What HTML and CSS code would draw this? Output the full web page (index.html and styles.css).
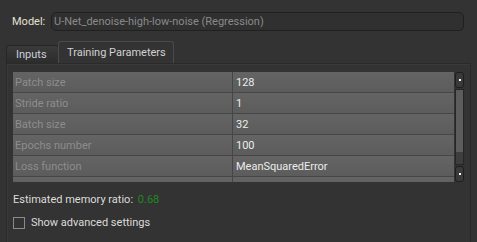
FILE: index.html
```html
<!DOCTYPE html>
<html lang="en">

<head>
  <meta charset="UTF-8">
  <title>Training Parameters</title>
  <link rel="stylesheet" href="styles.css">
</head>

<body>
  <div class="model-row">
    <label class="model-label">Model:</label>
    <div class="model-box">U-Net_denoise-high-low-noise (Regression)</div>
  </div>

  <div class="tabs">
    <div class="tab">Inputs</div>
    <div class="tab active">Training Parameters</div>
  </div>

  <div class="panel">
    <div class="params">
      <div class="grid">
        <div class="row"><span class="key">Patch size</span><span class="val">128</span></div>
        <div class="row"><span class="key">Stride ratio</span><span class="val">1</span></div>
        <div class="row"><span class="key">Batch size</span><span class="val">32</span></div>
        <div class="row"><span class="key">Epochs number</span><span class="val">100</span></div>
        <div class="row"><span class="key">Loss function</span><span class="val">MeanSquaredError</span></div>
        <div class="row"><span class="key"></span><span class="val"></span></div>
      </div>
      <div class="scrollbar">
        <div class="sb-btn"><i></i></div>
        <div class="sb-track"><div class="sb-handle"></div></div>
        <div class="sb-btn"><i></i></div>
      </div>
    </div>

    <p class="estimate">Estimated memory ratio: <span class="ratio">0.68</span></p>

    <label class="check">
      <span class="box"></span>
      Show advanced settings
    </label>
  </div>
</body>

</html>
```

FILE: styles.css
```css
body {
  background-color: #333333;
  margin: 0;
  height: 242px;
  overflow: hidden;
  display: flex;
  flex-direction: column;
  font-family: Roboto, "Liberation Sans", sans-serif;
  font-size: 11px;
  color: #dcdcdc;
}

.model-row {
  display: flex;
  align-items: center;
  padding: 12px 13px 0 12px;
}

.model-label {
  width: 39px;
  color: #e4e0d4;
}

.model-box {
  flex: 1;
  height: 17px;
  line-height: 17px;
  padding-left: 2px;
  border: 1px solid #202020;
  border-radius: 5px;
  background: #303030;
  color: #8a8a8a;
}

.tabs {
  display: flex;
  align-items: flex-end;
  margin-top: 10px;
  padding-left: 6px;
  height: 22px;
}

.tab {
  height: 17px;
  line-height: 18px;
  padding: 0 9px;
  width: 33px;
  border: 1px solid #262626;
  border-bottom: none;
  border-radius: 3px 3px 0 0;
  background: linear-gradient(#3a3a3a, #2c2c2c);
  color: #c9d0dc;
}

.tab.active {
  width: auto;
  height: 21px;
  line-height: 22px;
  padding: 0 7px 0 8px;
  margin-left: -1px;
  border-color: #4a4a4a;
  background: #333333;
  color: #d2d2d2;
}

.panel {
  flex: 1;
  margin: 0 6px 0 6px;
  padding: 8px 6px 0 6px;
  border: 1px solid #2a2a2a;
  border-bottom: none;
  box-shadow: inset 1px 1px 0 #3a3a3a;
}

.params {
  display: flex;
  height: 110px;
}

.grid {
  flex: 1;
  overflow: hidden;
  background: #5a5a5a;
}

.row {
  display: grid;
  grid-template-columns: 220px 1fr;
  height: 20px;
  border-bottom: 1px solid #464646;
  background: linear-gradient(#646464, #5c5c5c);
  line-height: 21px;
}

.key {
  padding-left: 2px;
  color: #8d8d8d;
  border-right: 1px solid #464646;
}

.val {
  padding-left: 3px;
  color: #ececec;
}

.scrollbar {
  width: 9px;
  margin-left: 1px;
  display: flex;
  flex-direction: column;
}

.sb-btn {
  height: 14px;
  border: 1px solid #1e1e1e;
  border-radius: 3px;
  background: #3a3a3a;
  display: flex;
  align-items: center;
  justify-content: center;
}

.sb-btn i {
  width: 2px;
  height: 2px;
  background: #ffffff;
}

.sb-track {
  flex: 1;
  margin: 1px 0;
  border: 1px solid #262626;
  background: #3e3e3e;
  display: flex;
  flex-direction: column;
}

.sb-handle {
  height: 62px;
  background: #5c5c5c;
}

.estimate {
  margin: 11px 0 0 0;
  line-height: 14px;
}

.ratio {
  margin-left: 2px;
  color: #1e8a1e;
}

.check {
  display: flex;
  align-items: center;
  margin-top: 9px;
  line-height: 14px;
}

.box {
  width: 10px;
  height: 10px;
  margin-right: 6px;
  border: 1px solid #8a8a8a;
}
```
